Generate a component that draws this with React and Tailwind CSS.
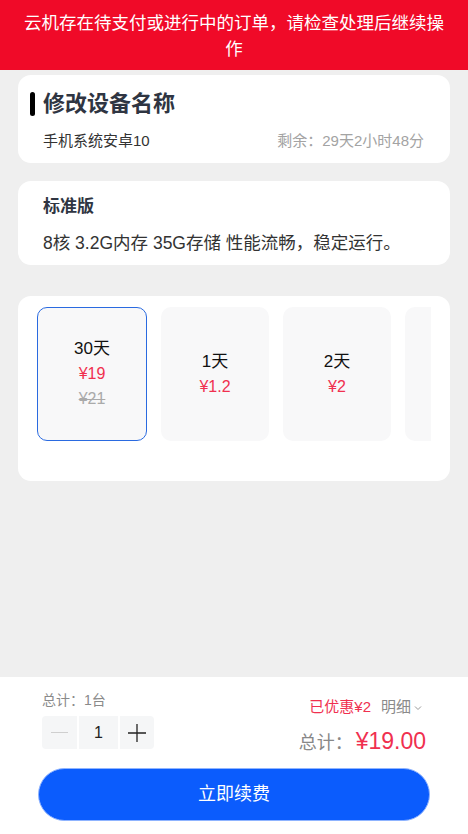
import React, { useState } from 'react';

const plans = [
  { days: '30天', price: '¥19', origin: '¥21' },
  { days: '1天', price: '¥1.2' },
  { days: '2天', price: '¥2' },
  { days: '', price: '' }, // only the edge peeks in
];

const PlanCard = ({ plan, active, onClick }) => {
  return (
    <div
      onClick={onClick}
      className={
        active
          ? 'shrink-0 w-[110px] h-[134px] rounded-[10px] border border-[#2a6ae0] bg-[#f8f8f9] flex flex-col items-center justify-center leading-[25px]'
          : 'shrink-0 w-[108px] h-[134px] rounded-[10px] border border-transparent bg-[#f8f8f9] flex flex-col items-center justify-center leading-[25px]'
      }
    >
      {plan.days && <div className="text-[17px] text-[#111]">{plan.days}</div>}
      {plan.price && <div className="text-[16px] text-[#f0304f]">{plan.price}</div>}
      {plan.origin && <div className="text-[16px] text-[#aaa] line-through">{plan.origin}</div>}
    </div>
  );
};

const App = () => {
  const [active, setActive] = useState(0);
  const [count, setCount] = useState(1);

  return (
    <div className="h-screen flex flex-col bg-[#efefef] font-['Liberation_Sans','Noto_Sans_CJK_SC',sans-serif]">
      <div className="bg-[#f00a28] text-white text-center text-[17.5px] leading-[26px] pt-[10px] pb-[8px] px-[18px]">
        云机存在待支付或进行中的订单，请检查处理后继续操作
      </div>

      <div className="flex-1 px-[18px] pt-[5px]">
        {/* device */}
        <div className="bg-white rounded-[13px] pl-3 pr-[26px] pt-[12px] pb-[10px]">
          <div className="flex items-center gap-2">
            <span className="w-[5px] h-[24px] rounded-full bg-black"></span>
            <span className="text-[22px] font-bold text-[#2f3542]">修改设备名称</span>
          </div>
          <div className="flex justify-between items-center pl-[13px] mt-[10px] text-[15px]">
            <span className="text-[#333]">手机系统安卓10</span>
            <span className="text-[#a3a3a3]">剩余：29天2小时48分</span>
          </div>
        </div>

        {/* spec */}
        <div className="bg-white rounded-[13px] mt-[18px] px-[25px] pt-[13px] pb-[9px]">
          <div className="text-[17px] font-bold text-[#2f3542] leading-[26px]">标准版</div>
          <div className="text-[17.5px] text-[#333] mt-[10px] leading-[26px]">8核 3.2G内存 35G存储 性能流畅，稳定运行。</div>
        </div>

        {/* plans */}
        <div className="bg-white rounded-[13px] mt-[31px] px-[19px] pt-[11px] pb-[40px]">
          <div className="flex gap-[14px] overflow-hidden">
            {plans.map((p, i) => (
              <PlanCard key={i} plan={p} active={active === i} onClick={() => setActive(i)} />
            ))}
          </div>
        </div>
      </div>

      {/* footer */}
      <div className="bg-white px-[38px] pt-[13px] pb-[13px]">
        <div className="flex justify-between items-start px-[4px] h-[59px]">
          <div>
            <div className="text-[14px] text-[#8a8a8a] leading-[20px]">总计：1台</div>
            <div className="flex gap-[2px] mt-[6px]">
              <button
                onClick={() => setCount(Math.max(1, count - 1))}
                className="w-[35px] h-[33px] bg-[#f5f6f7] rounded-l-[4px] flex items-center justify-center"
              >
                <span className="w-[17px] h-px bg-[#cfcfcf]"></span>
              </button>
              <div className="w-[39px] h-[33px] bg-[#f5f6f7] flex items-center justify-center text-[16px] text-[#222]">
                {count}
              </div>
              <button
                onClick={() => setCount(count + 1)}
                className="w-[34px] h-[33px] bg-[#f5f6f7] rounded-r-[4px] flex items-center justify-center"
              >
                <svg width="20" height="20" viewBox="0 0 20 20">
                  <path d="M10 1v18M1 10h18" stroke="#222" strokeWidth="1.3" fill="none" />
                </svg>
              </button>
            </div>
          </div>
          <div className="flex flex-col items-end mt-[7px]">
            <div className="flex items-center text-[15px] leading-[20px] mr-[3px]">
              <span className="text-[#f0304f]">已优惠¥2</span>
              <span className="text-[#8a8a8a] ml-[10px]">明细</span>
              <svg className="ml-[2px] mt-[2px]" width="10" height="10" viewBox="0 0 10 10">
                <path d="M2 3.5l3 3 3-3" stroke="#999" strokeWidth="1" fill="none" />
              </svg>
            </div>
            <div className="flex items-baseline mt-[9px] leading-[30px]">
              <span className="text-[18px] text-[#888]">总计：</span>
              <span className="text-[23px] text-[#f0304f] ml-[3px]">¥19.00</span>
            </div>
          </div>
        </div>
        <button className="mt-[19px] w-full h-[53px] rounded-full bg-[#0b5cfd] border border-[#8fb4ff] text-white text-[18px]">
          立即续费
        </button>
      </div>
    </div>
  );
};

export default App;
